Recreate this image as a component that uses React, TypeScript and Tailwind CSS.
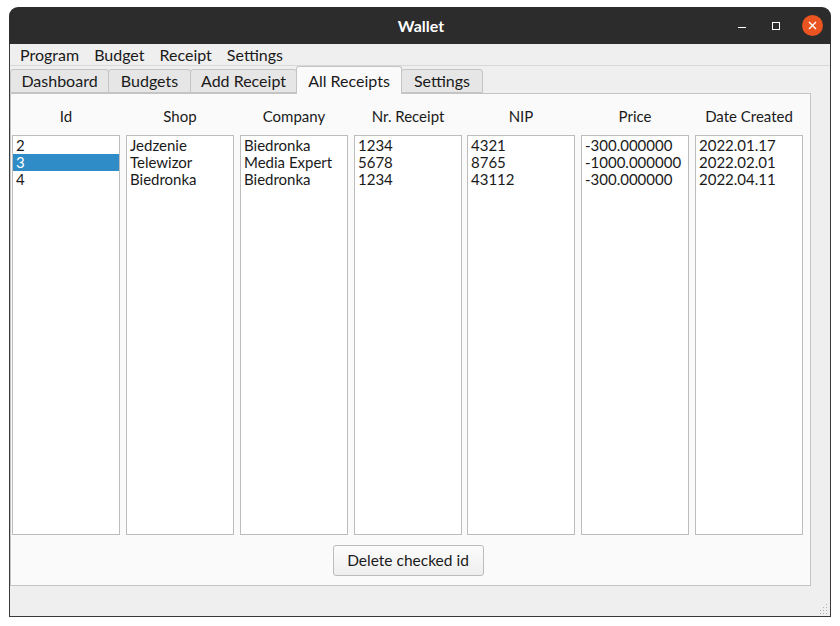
export default function App() {
  const columns = [
    { title: "Id", rows: ["2", "3", "4"] },
    { title: "Shop", rows: ["Jedzenie", "Telewizor", "Biedronka"] },
    { title: "Company", rows: ["Biedronka", "Media Expert", "Biedronka"] },
    { title: "Nr. Receipt", rows: ["1234", "5678", "1234"] },
    { title: "NIP", rows: ["4321", "8765", "43112"] },
    { title: "Price", rows: ["-300.000000", "-1000.000000", "-300.000000"] },
    { title: "Date Created", rows: ["2022.01.17", "2022.02.01", "2022.04.11"] },
  ];

  const tabs = [
    { label: "Dashboard", w: "w-[99px]" },
    { label: "Budgets", w: "w-[83px]" },
    { label: "Add Receipt", w: "w-[107px]" },
    { label: "All Receipts", w: "w-[106px]" },
    { label: "Settings", w: "w-[82px]" },
  ];

  return (
    <div className="w-[840px] h-[626px] bg-white pt-[7px] pl-[9px] text-[15px] text-[#1a1a1a] [font-family:Lato,'Noto_Sans',sans-serif]">
      <div className="w-[822px] h-[610px] flex flex-col">
        {/* title bar */}
        <div className="h-[37px] bg-[#2c2c2c] rounded-t-[9px] flex items-center relative">
          <div className="flex-1 text-center text-white font-bold text-[16px] pl-[2px]">Wallet</div>
          <div className="absolute right-[8px] top-0 h-full flex items-center">
            <div className="w-[8px] h-[1px] bg-white mr-[26px] mt-[4px]" />
            <div className="w-[8px] h-[8px] border border-white mr-[22px]" />
            <div className="w-[21px] h-[21px] rounded-full bg-[#e95420] flex items-center justify-center">
              <svg width="9" height="9" viewBox="0 0 9 9">
                <path d="M1 1L8 8M8 1L1 8" stroke="white" strokeWidth="1.4" />
              </svg>
            </div>
          </div>
        </div>

        {/* window body */}
        <div className="flex-1 bg-[#efefef] border-x border-b border-[#3a3a3a] flex flex-col">
          {/* menu bar */}
          <div className="h-[22px] flex items-center pl-[3px] border-b border-[#d8d8d8] text-[16px]">
            {["Program", "Budget", "Receipt", "Settings"].map((m) => (
              <div key={m} className="px-[7px] mr-[1px] leading-none">{m}</div>
            ))}
          </div>

          {/* tabs */}
          <div className="h-[27px] flex items-end relative z-10 text-[16px]">
            {tabs.map((t) =>
              t.label === "All Receipts" ? (
                <div
                  key={t.label}
                  className={t.w + " h-[28px] -mb-[1px] -mr-[1px] flex items-center justify-center bg-[#fafafa] border border-b-0 border-[#c4c4c4] rounded-t-[3px]"}
                >
                  {t.label}
                </div>
              ) : (
                <div
                  key={t.label}
                  className={t.w + " h-[24px] -mr-[1px] flex items-center justify-center bg-[#e6e6e6] border border-[#c4c4c4] rounded-t-[3px]"}
                >
                  {t.label}
                </div>
              )
            )}
          </div>

          {/* panel */}
          <div className="w-[801px] h-[493px] bg-[#fafafa] border border-[#c4c4c4] flex flex-col pl-[1px]">
            <div className="flex gap-[6px]">
              {columns.map((c) => (
                <div key={c.title} className={"w-[108px] flex flex-col " + (c.title === "NIP" ? "-ml-[1px]" : "")}>
                  <div className="h-[41px] flex items-center justify-center pt-[3px]">{c.title}</div>
                  <div className="h-[400px] bg-white border border-[#bdbdbd] pt-[1px]">
                    {c.rows.map((r, i) => (
                      <div
                        key={i}
                        className={
                          "h-[17px] leading-[17px] pl-[3px] " +
                          (c.title === "Id" && r === "3" ? "bg-[#308cc6] text-white" : "")
                        }
                      >
                        {r}
                      </div>
                    ))}
                  </div>
                </div>
              ))}
            </div>
            <div className="flex justify-center mt-[10px] pr-[6px]">
              <button className="w-[151px] h-[31px] rounded-[3px] border border-[#bcbcbc] bg-gradient-to-b from-[#fcfcfc] to-[#eeeeee] text-[#1a1a1a] text-[15.5px]">
                Delete checked id
              </button>
            </div>
          </div>

          {/* status bar */}
          <div className="flex-1 flex justify-end items-end pr-[2px] pb-[2px]">
            <svg width="10" height="10" viewBox="0 0 10 10">
              {[
                [8, 0], [8, 3], [5, 3], [8, 6], [5, 6], [2, 6], [8, 9], [5, 9], [2, 9],
              ].map(([x, y], i) => (
                <rect key={i} x={x} y={y} width="1" height="1" fill="#b0b0b0" />
              ))}
            </svg>
          </div>
        </div>
      </div>
    </div>
  );
}
